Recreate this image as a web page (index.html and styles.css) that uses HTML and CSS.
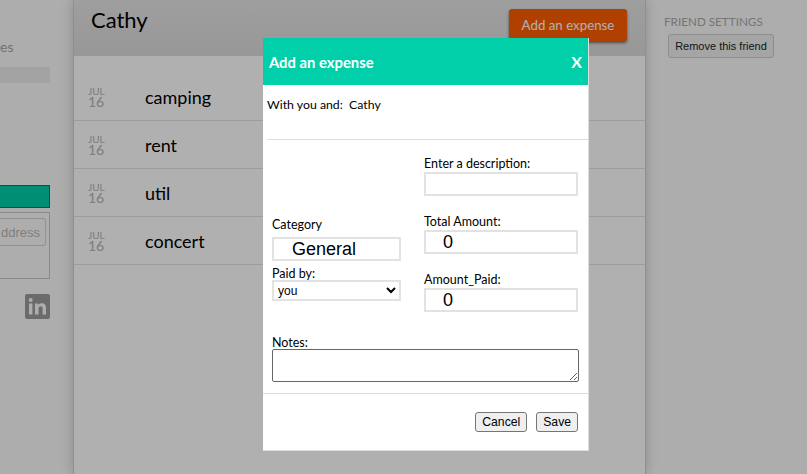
FILE: index.html
```html
<!DOCTYPE html>
<html>

	<head>
		<meta charset="UTF-8">
		<title>Add an expense</title>
		<link rel="stylesheet" href="styles.css">
	</head>

	<body>
		<div class="page">
			<div class="left">
				<div class="left-title">es</div>
				<div class="left-bar"></div>
				<div class="left-tab"></div>
				<div class="left-box">
					<button class="left-btn">ddress</button>
				</div>
				<div class="social">
					<svg viewBox="0 0 25 25" width="25" height="25">
						<rect width="25" height="25" rx="2" fill="#9c9c9c" />
						<rect x="4" y="9.5" width="3.4" height="11" fill="#fbfbfb" />
						<circle cx="5.7" cy="6" r="2" fill="#fbfbfb" />
						<path d="M10 9.500h3.200v1.600c.6-1 1.800-1.900 3.600-1.900 3.200 0 4.200 2 4.200 5v6.300h-3.400v-5.600c0-1.500-.4-2.700-1.800-2.700-1.500 0-2.300 1-2.300 2.700v5.600H10z" fill="#fbfbfb" />
					</svg>
				</div>
			</div>

			<div class="main">
				<div class="main-head">
					<h1>Cathy</h1>
					<button class="add-btn">Add an expense</button>
				</div>
				<div class="list">
					<div class="row">
						<div class="date"><span class="month">JUL</span><span class="day">16</span></div>
						<div class="desc">camping</div>
					</div>
					<div class="row">
						<div class="date"><span class="month">JUL</span><span class="day">16</span></div>
						<div class="desc">rent</div>
					</div>
					<div class="row">
						<div class="date"><span class="month">JUL</span><span class="day">16</span></div>
						<div class="desc">util</div>
					</div>
					<div class="row">
						<div class="date"><span class="month">JUL</span><span class="day">16</span></div>
						<div class="desc">concert</div>
					</div>
				</div>
			</div>

			<div class="right">
				<div class="right-title">FRIEND SETTINGS</div>
				<button class="remove-btn">Remove this friend</button>
			</div>
		</div>

		<div class="overlay"></div>

		<div class="modal">
			<div class="modal-head">
				<span>Add an expense</span>
				<span class="close">X</span>
			</div>
			<div class="with">With you and:&nbsp; Cathy</div>
			<form class="modal-form">
				<div class="fields">
					<div class="col-left">
						<label class="lbl-category">Category</label>
						<input type="text" class="big-input category" value="General" />
						<label class="lbl-paid">Paid by:</label>
						<select class="paid">
							<option>you</option>
						</select>
					</div>
					<div class="col-right">
						<label>Enter a description:</label>
						<input type="text" class="big-input" />
						<label class="lbl-total">Total Amount:</label>
						<input type="text" class="big-input" value="0" />
						<label class="lbl-total">Amount_Paid:</label>
						<input type="text" class="big-input" value="0" />
					</div>
				</div>
				<div class="notes">
					<label>Notes:</label>
					<textarea></textarea>
				</div>
				<div class="actions">
					<button type="button">Cancel</button>
					<button type="button">Save</button>
				</div>
			</form>
		</div>
	</body>

</html>
```

FILE: styles.css
```css
* {
	padding: 0;
	margin: 0;
	box-sizing: border-box;
}

html,
body {
	height: 100%;
	overflow: hidden;
}

body {
	font-family: Lato, "Liberation Sans", sans-serif;
	background: #fbfbfb;
	color: #000;
}

.page {
	display: flex;
	height: 474px;
}

.left {
	width: 73px;
	padding-right: 23px;
	padding-top: 38px;
	display: flex;
	flex-direction: column;
	align-items: flex-end;
	overflow: hidden;
}

.left-title {
	align-self: flex-start;
	font-size: 14px;
	line-height: 17px;
	color: #a4a4a4;
	white-space: nowrap;
	height: 29px;
}

.left-bar {
	width: 50px;
	height: 16px;
	background: #ececec;
	flex-shrink: 0;
}

.left-tab {
	width: 50px;
	height: 23px;
	margin-top: 102px;
	background: #00cfaa;
	border: 1px solid #555;
	border-left: 0;
	flex-shrink: 0;
}

.left-box {
	width: 50px;
	height: 67px;
	margin-top: 4px;
	border: 1px solid #c8c8c8;
	border-left: 0;
	padding: 5px 3px 0 0;
	display: flex;
	justify-content: flex-end;
	align-items: flex-start;
	flex-shrink: 0;
}

.left-btn {
	width: 46px;
	height: 28px;
	padding-right: 5px;
	text-align: right;
	font-family: "Liberation Sans", sans-serif;
	font-size: 13px;
	color: #b8b8b8;
	background: #fbfbfb;
	border: 1px solid #d4d4d4;
	border-left: 0;
	border-radius: 0 3px 3px 0;
	white-space: nowrap;
	flex-shrink: 0;
}

.social {
	margin-top: 15px;
	line-height: 0;
}

.main {
	width: 573px;
	background: #fff;
	border-left: 1px solid #d0d0d0;
	border-right: 1px solid #d0d0d0;
	box-shadow: 0 0 12px rgba(0, 0, 0, 0.2);
}

.main-head {
	height: 56px;
	background: linear-gradient(#e6e6e6, #dcdcdc);
	display: flex;
	justify-content: space-between;
	align-items: flex-start;
	padding: 0 18px 0 17px;
}

h1 {
	font-size: 22px;
	font-weight: 400;
	line-height: 40px;
}

.add-btn {
	width: 118px;
	height: 32px;
	margin-top: 9px;
	background: #ff5e00;
	color: #fff;
	font-family: Lato, sans-serif;
	font-size: 13.3px;
	border: 0;
	border-radius: 3px;
	box-shadow: 0 2px 3px rgba(0, 0, 0, 0.5);
}

.list {
	padding-top: 17px;
}

.row {
	display: flex;
	align-items: center;
	height: 48px;
	border-bottom: 1px solid #e2e2e2;
	padding-left: 14px;
}

.date {
	width: 57px;
	display: flex;
	flex-direction: column;
	color: #b4b4b4;
}

.month {
	font-size: 10px;
	line-height: 10px;
}

.day {
	font-size: 14px;
	line-height: 12px;
}

.desc {
	font-size: 18px;
	line-height: 20px;
}

.right {
	flex: 1;
	padding: 14px 0 0 18px;
}

.right-title {
	font-size: 11.7px;
	line-height: 14px;
	color: #aaa;
}

.remove-btn {
	display: block;
	width: 106px;
	height: 24px;
	margin: 6px 0 0 4px;
	font-family: "Liberation Sans", sans-serif;
	font-size: 11px;
	background: #efefef;
	color: #222;
	border: 1px solid #ccc;
	border-radius: 3px;
}

.overlay {
	position: absolute;
	top: 0;
	left: 0;
	width: 100%;
	height: 100%;
	background: rgba(0, 0, 0, 0.31);
}

.modal {
	position: absolute;
	top: 38px;
	left: 263px;
	width: 326px;
	height: 413px;
	background: #fff;
	font-size: 12.5px;
	border: 1px solid #ddd;
	border-width: 0 1px 1px 0;
}

.modal-head {
	height: 47px;
	background: #00cfaa;
	color: #fff;
	font-size: 14.8px;
	font-weight: 700;
	display: flex;
	justify-content: space-between;
	align-items: center;
	padding: 0 6px;
}

.close {
	font-size: 16px;
}

.with {
	height: 55px;
	margin-left: 4px;
	padding-top: 11px;
	font-size: 12.3px;
	line-height: 18px;
	border-bottom: 1px solid #ddd;
}

.fields {
	display: flex;
	padding: 15px 10px 0 9px;
	justify-content: space-between;
}

.col-left,
.col-right {
	display: flex;
	flex-direction: column;
}

.col-left {
	width: 129px;
	justify-content: flex-end;
	padding-bottom: 11px;
}

.col-right {
	width: 154px;
}

.col-right label {
	margin-bottom: -1px;
}

label {
	display: block;
	line-height: 18px;
}

.lbl-category {
	margin-bottom: 3px;
}

.lbl-paid {
	margin-top: 4px;
}

.col-right .lbl-total {
	margin-top: 17px;
}

.big-input {
	width: 100%;
	height: 24px;
	padding-left: 17px;
	border: 2px solid #e2e2e2;
	font-family: "Liberation Sans", sans-serif;
	font-size: 18px;
	color: #000;
	outline: 0;
}

.big-input.category {
	padding-left: 18px;
}

.paid {
	width: 100%;
	height: 21px;
	margin-top: -3px;
	border: 2px solid #e2e2e2;
	background: #fff;
	font-family: "Liberation Sans", sans-serif;
	font-size: 12px;
}

.notes {
	padding: 23px 9px 0 9px;
}

.notes label {
	line-height: 16px;
}

textarea {
	display: block;
	width: 307px;
	height: 33px;
	margin-top: -2px;
	border: 1px solid #666;
	border-radius: 2px;
}

.actions {
	margin-top: 11px;
	padding: 18px 10px 0 0;
	border-top: 1px solid #ddd;
	display: flex;
	justify-content: flex-end;
	gap: 9px;
}

.actions button {
	height: 20px;
	padding: 0 6px;
	font-family: "Liberation Sans", sans-serif;
	font-size: 12.2px;
	background: #efefef;
	border: 1px solid #767676;
	border-radius: 3px;
}
```
